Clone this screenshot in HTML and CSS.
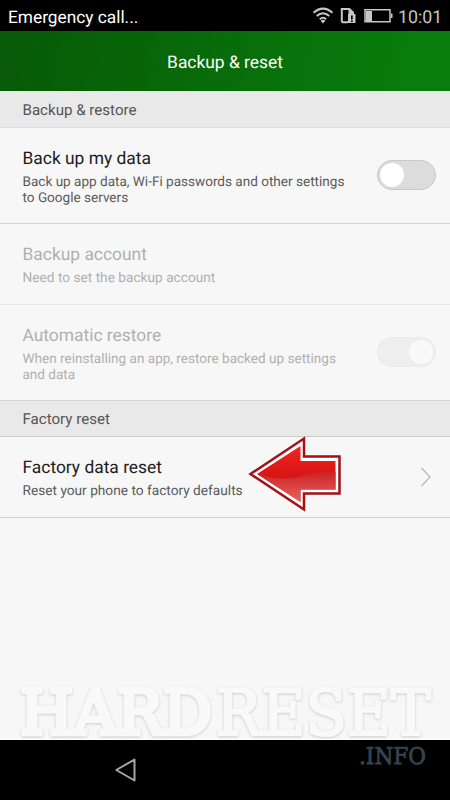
FILE: index.html
```html
<!DOCTYPE html>
<html lang="en">
<head>
<meta charset="utf-8">
<title>Backup &amp; reset</title>
<link rel="stylesheet" href="styles.css">
</head>
<body>
<div class="phone">
  <div class="status">
    <span class="carrier">Emergency call...</span>
    <svg class="status-icons" width="84" height="31" viewBox="0 0 84 31">
      <g fill="none" stroke="#c6c6c6" stroke-width="2">
        <path d="M1.5 12.8Q11 4.4 20.5 12.8M4.7 16.1Q11 10.4 17.3 16.1M7.8 19.2Q11 16.4 14.2 19.2"/>
        <path d="M53 9.8h25v12H53z" stroke-width="1.5"/>
        <path d="M29.8 22.2V9h7.4l3.8 3.5V14M29.8 22.2H36" stroke-width="2"/>
      </g>
      <path d="M8.6 20.8Q11 18.8 13.4 20.8L11 23.6z" fill="#c6c6c6"/>
      <path d="M54 11h6v10h-6zM79 13.5h1.5v4.5H79zM36.5 8h1l4.5 4.5V14h-5.5z" fill="#c6c6c6"/>
      <path d="M36 14h7.5v9H36z" fill="#c6c6c6"/>
      <path d="M39 15.5h1.7v4H39zM39 20.5h1.7V22H39z" fill="#000"/>
    </svg>
    <span class="clock">10:01</span>
  </div>
  <header class="bar"><h1>Backup &amp; reset</h1></header>
  <main class="list">
    <h2 class="section">Backup &amp; restore</h2>
    <div class="row row-tall">
      <div class="text"><div class="title">Back up my data</div><div class="desc">Back up app data, Wi-Fi passwords and other settings<br>to Google servers</div></div>
      <span class="switch"></span>
    </div>
    <div class="row disabled faint">
      <div class="text"><div class="title">Backup account</div><div class="desc wide">Need to set the backup account</div></div>
    </div>
    <div class="row row-tall disabled">
      <div class="text"><div class="title">Automatic restore</div><div class="desc">When reinstalling an app, restore backed up settings<br>and data</div></div>
      <span class="switch on"></span>
    </div>
    <h2 class="section second">Factory reset</h2>
    <div class="row">
      <div class="text"><div class="title">Factory data reset</div><div class="desc wide">Reset your phone to factory defaults</div></div>
      <svg class="chevron" width="12" height="20" viewBox="0 0 12 20"><path d="M1.5 1L10 10L1.5 19" fill="none" stroke="#b9b9b9" stroke-width="1.3"/></svg>
    </div>
  </main>
  <nav class="nav">
    <svg class="back" width="24" height="26" viewBox="0 0 24 26"><path d="M3.3 13L21.5 2.5V23.5z" fill="none" stroke="#a6a6a6" stroke-width="2" stroke-linejoin="round"/></svg>
    <svg class="info" width="70" height="24" viewBox="0 0 70 24"><text x="1" y="18.3" textLength="67" lengthAdjust="spacingAndGlyphs">.INFO</text></svg>
  </nav>
  <svg class="arrow" width="94" height="76" viewBox="0 0 94 76">
    <defs>
      <linearGradient id="red" x1="0" y1="0" x2="0" y2="1"><stop offset="0" stop-color="#ee2424"/><stop offset="1" stop-color="#c80808"/></linearGradient>
      <linearGradient id="shine" x1="0" y1="0" x2="0" y2="1"><stop offset="0" stop-color="#cc2222"/><stop offset="1" stop-color="#e86565"/></linearGradient>
      <clipPath id="inner"><path d="M8 38L52.5 10V24.5H88V54.5H52.5V66z"/></clipPath>
    </defs>
    <path d="M2.5 38L56 2.5V20.5H91.5V57.5H56V73.5z" fill="#fff" stroke="#a31116" stroke-width="2.5"/>
    <path d="M9 38L52.5 10V25H87.5V53.5H52.5V66z" fill="url(#red)"/>
    <path clip-path="url(#inner)" d="M9 38C34 46 48 42 62 38Q76 35 87.5 36V53.5H52.5V66z" fill="url(#shine)"/>
  </svg>
  <svg class="watermark" width="450" height="60" viewBox="0 0 450 60">
    <g class="mark-text">
      <text class="hard" x="20" y="54" textLength="192" lengthAdjust="spacingAndGlyphs">HARD</text>
      <text class="reset" x="216" y="54.5" textLength="215" lengthAdjust="spacingAndGlyphs">RESET</text>
    </g>
    <path d="M0 59.5H450" stroke="#fff"/>
  </svg>
</div>
</body>
</html>
```

FILE: styles.css
```css
* { box-sizing: border-box; }
body { margin: 0; font-family: Roboto, sans-serif; text-rendering: geometricPrecision; }
.phone { position: relative; width: 450px; height: 800px; display: flex; flex-direction: column; background: #f7f7f7; overflow: hidden; }
.status { height: 31px; flex: none; display: flex; align-items: center; background: #000; padding: 3px 8px 0; }
.carrier { color: #fff; font-size: 17.3px; line-height: 28px; padding-top: 1px; flex: 1; }
.status-icons { margin: -3px 2px 0 0; }
.clock { color: #c6c6c6; font-size: 17.8px; width: 44px; white-space: nowrap; }
.bar { height: 60px; flex: none; display: flex; align-items: center; justify-content: center; background: linear-gradient(100deg, #075907, #087c0c 90%); padding-top: 4px; }
h1 { margin: 0; color: #fff; font-size: 17.4px; font-weight: 400; }
.list { flex: 1; }
.section { margin: 0; height: 37px; padding: 1px 22.5px 0; line-height: 36px; font-size: 15.1px; font-weight: 400; color: #555; background: #e9e9e9; border-bottom: 1px solid #dcdcdc; }
.second { height: 36px; padding-top: 0; border-bottom-color: #ccc; }
.row { height: 81px; display: flex; align-items: flex-start; justify-content: space-between; padding: 21px 14px 0 22.5px; border-bottom: 1px solid #d4d4d4; }
.row-tall { height: 96px; }
.faint { border-bottom-color: #e5e5e5; }
.title { font-size: 17.4px; line-height: 20px; color: #1c1c1c; white-space: nowrap; }
.desc { margin-top: 6px; font-size: 13.55px; line-height: 15.6px; color: #5a5a5a; white-space: nowrap; }
.wide { font-size: 13.7px; }
.disabled .title, .disabled .desc { color: #b0b0b0; }
.switch { width: 59px; height: 30px; margin-top: 11px; padding: 2px; border: 1px solid #c8c8c8; border-radius: 15px; background: #dcdcdc; display: flex; }
.switch::before { content: ""; width: 24px; height: 24px; border-radius: 50%; background: #fff; }
.switch.on { justify-content: flex-end; background: #eee; border-color: #ebebeb; }
.switch.on::before { background: #f9f9f9; }
.chevron { margin: 9px 4px 0 0; }
.nav { height: 60px; flex: none; display: flex; align-items: flex-start; justify-content: space-between; background: #000; padding: 0 22px 0 113px; }
.back { margin-top: 17px; }
.info { margin-top: 6px; overflow: visible; font-family: "DejaVu Serif", serif; font-size: 23px; fill: #34444f; stroke: #34444f; stroke-width: .8; }
.arrow { position: absolute; left: 248px; top: 436px; }
.watermark { position: absolute; left: 0; top: 680px; overflow: visible; }
.mark-text { font-family: "DejaVu Serif", serif; fill: #f9f9f9; stroke: #f9f9f9; stroke-linejoin: round; filter: drop-shadow(0 1.5px 1.5px rgba(0,0,0,.17)); }
.hard { font-size: 62px; stroke-width: 4.5; }
.reset { font-size: 64px; stroke-width: 2.2; }
```
